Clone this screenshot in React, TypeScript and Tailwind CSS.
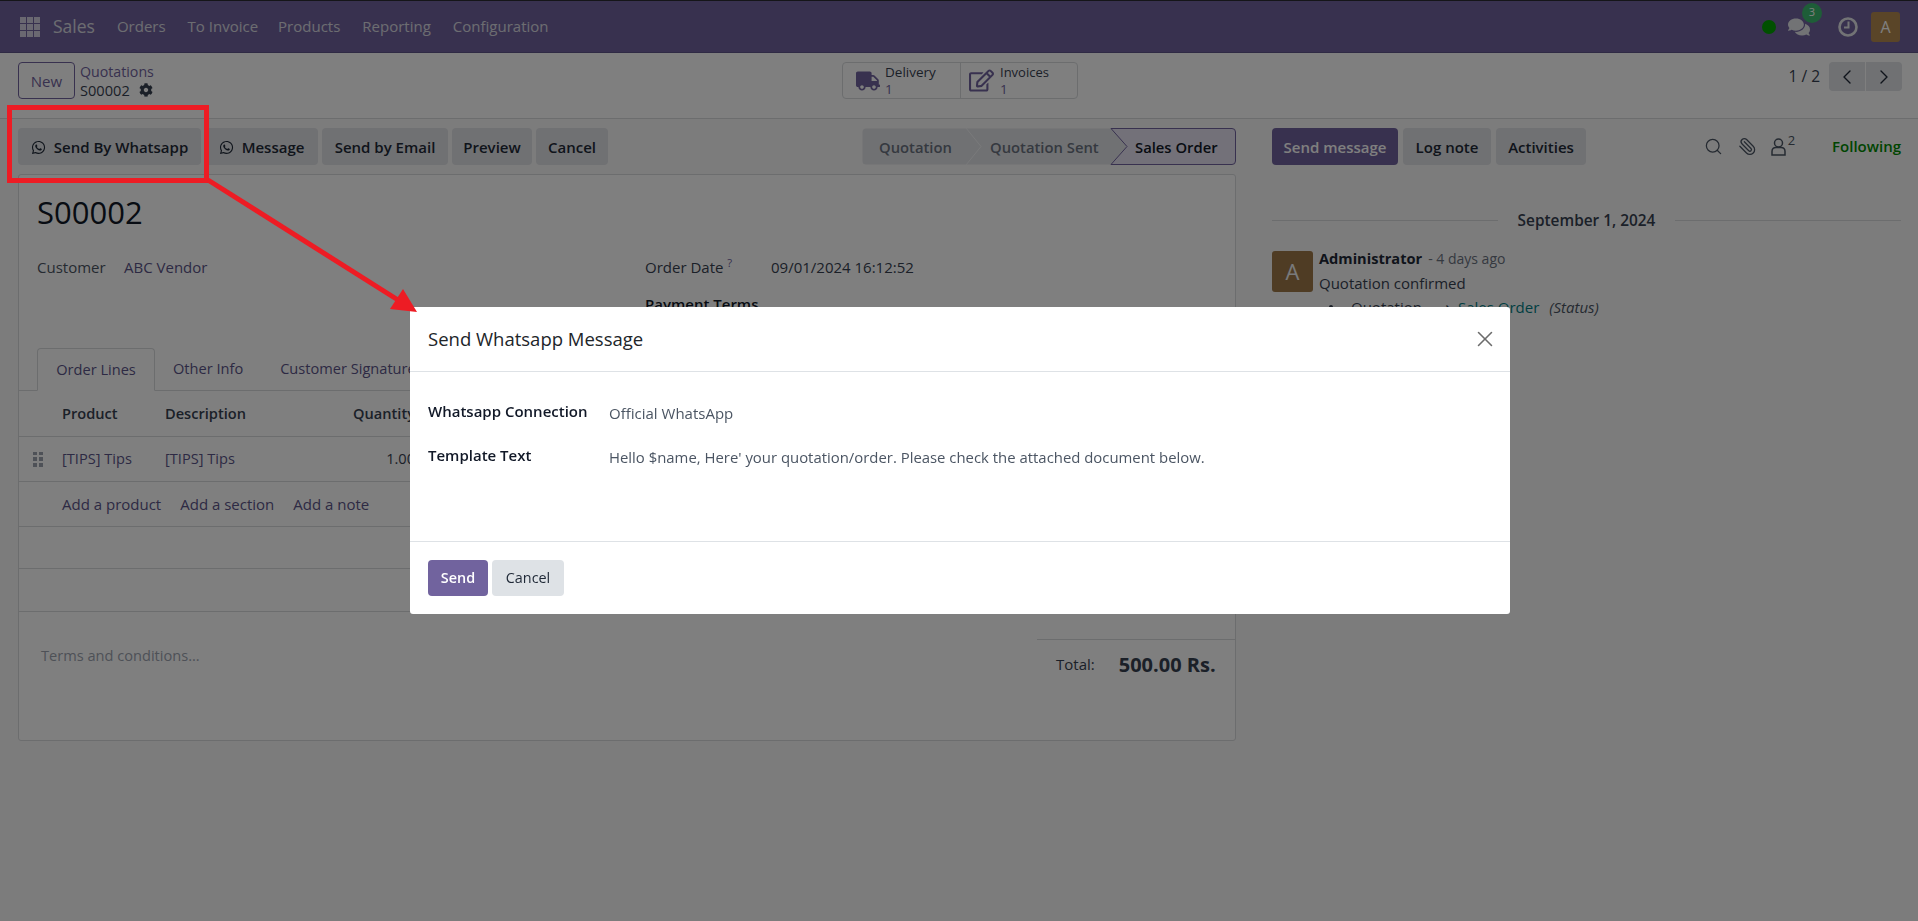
import React from "react";
import { FaCog, FaComments, FaRegEdit, FaTruck, FaWhatsapp } from "react-icons/fa";
import { ChevronLeft, ChevronRight, Paperclip, Search, X } from "lucide-react";

const GrayBtn = ({ children, w }: { children: React.ReactNode; w: string }) => (
  <div className={`flex h-[37px] items-center justify-center gap-[8px] rounded-[4px] bg-[#e0e2e6] pt-[1px] text-[15px] font-semibold text-[#1f2937] ${w}`}>
    {children}
  </div>
);

const AppsIcon = () => (
  <div className="grid h-[20px] w-[20px] grid-cols-3 gap-[1px]">
    {[0, 1, 2, 3, 4, 5, 6, 7, 8].map((i) => (
      <div key={i} className="bg-[#ffffff] opacity-70" />
    ))}
  </div>
);

const DragHandle = () => (
  <div className="grid h-[15px] w-[10px] grid-cols-2 gap-x-[2px] gap-y-[2px]">
    {[0, 1, 2, 3, 4, 5].map((i) => (
      <div key={i} className="bg-[#9ca3af]" />
    ))}
  </div>
);

const Navbar = () => (
  <div className="flex h-[53px] items-center border-t border-b border-t-[#2a2a33] border-b-[#5f5488] bg-[#71639e] text-[#e5e7eb]">
    <div className="ml-[20px] mr-[13px]">
      <AppsIcon />
    </div>
    <span className="mr-[22px] text-[17.5px] opacity-90">Sales</span>
    <nav className="flex gap-[22px] text-[15px] opacity-90">
      <span>Orders</span>
      <span className="mr-[-2px]">To Invoice</span>
      <span>Products</span>
      <span>Reporting</span>
      <span>Configuration</span>
    </nav>
    <div className="ml-auto mr-[18px] flex items-center">
      <div className="mr-[12px] h-[14px] w-[14px] rounded-full bg-[#00a000]" />
      <div className="relative mr-[27px] w-[23px] text-[#e5e7eb]">
        <FaComments size={22} />
        <span className="absolute left-[14px] top-[-13px] flex h-[20px] w-[20px] items-center justify-center rounded-full bg-[#3dbb70] text-[11px] text-white">
          3
        </span>
      </div>
      <svg className="mr-[13px]" width="20" height="20" viewBox="0 0 20 20" fill="none" stroke="#e5e7eb" strokeWidth="2.6">
        <circle cx="10" cy="10" r="8.5" />
        <path d="M10.5 4.5V10.5H6" strokeWidth="2" />
      </svg>
      <div className="flex h-[30px] w-[29px] items-center justify-center rounded-[3px] bg-[#b58a50] text-[16px] text-white">A</div>
    </div>
  </div>
);

const ControlPanel = () => (
  <div className="relative flex h-[66px] items-start border-b border-[#d8dadd] bg-white pl-[18px] pr-[16px] pt-[9px]">
    <div className="flex h-[37px] w-[57px] items-center justify-center rounded-[4px] border border-[#71639e] pt-[1px] text-[15px] font-medium text-[#71639e]">
      New
    </div>
    <div className="ml-[5px] flex flex-col pt-[1px] text-[14.2px] leading-[18px] text-[#71639e]">
      <span>Quotations</span>
      <span className="flex items-center gap-[9px] text-[14.6px] text-[#374151]">
        S00002 <FaCog size={14} />
      </span>
    </div>
    <div className="absolute left-[842px] top-[9px] flex h-[37px] w-[236px] rounded-[4px] border border-[#d8dadd] text-[13.5px] leading-[17px] text-[#374151]">
      <div className="flex w-[118px] items-center border-r border-[#d8dadd] pl-[13px]">
        <FaTruck size={24} className="text-[#71639e]" />
        <div className="ml-[5px] flex flex-col pt-[1px]">
          <span>Delivery</span>
          <span className="text-[#71639e]">1</span>
        </div>
      </div>
      <div className="flex items-center pl-[8px]">
        <FaRegEdit size={25} className="text-[#71639e]" />
        <div className="ml-[6px] flex flex-col pt-[1px]">
          <span className="text-[13px]">Invoices</span>
          <span className="text-[#71639e]">1</span>
        </div>
      </div>
    </div>
    <div className="ml-auto flex items-center gap-[9px] text-[15.5px] text-[#374151]">
      <span>1 / 2</span>
      <div className="flex h-[29px] w-[73px] overflow-hidden rounded-[4px] bg-[#e0e2e6]">
        <div className="flex flex-1 items-center justify-center border-r border-white text-[#1f2937]">
          <ChevronLeft size={24} strokeWidth={1.4} />
        </div>
        <div className="flex flex-1 items-center justify-center text-[#1f2937]">
          <ChevronRight size={24} strokeWidth={1.4} />
        </div>
      </div>
    </div>
  </div>
);

const StatusBar = () => (
  <div className="relative ml-auto h-[37px] w-[374px]">
    <svg className="absolute inset-0" width="374" height="37" viewBox="0 0 374 37" fill="none">
      <path d="M4 .5H249L265 18.5L249 36.5H4Q.5 36.5 .5 33V4Q.5 .5 4 .5Z" fill="#e0e2e6" />
      <path d="M249 .5H370Q373.5 .5 373.5 4V33Q373.5 36.5 370 36.5H249L265 18.5Z" fill="#e6e2f2" stroke="#71639e" />
      <path d="M104 0L119 18.5L104 37" stroke="#f3f4f6" />
    </svg>
    <div className="absolute inset-0 flex items-center pt-[1px] text-[14.8px] font-semibold">
      <span className="ml-[17px] w-[110px] text-[#6b7280]">Quotation</span>
      <span className="ml-[1px] w-[145px] text-[#6b7280]">Quotation Sent</span>
      <span className="text-[#111827]">Sales Order</span>
    </div>
  </div>
);

const Row = ({ children, h }: { children?: React.ReactNode; h: string }) => (
  <div className={`grid grid-cols-[43px_103px_250px] items-center border-b border-[#d8dadd] text-[14.6px] ${h}`}>{children}</div>
);

const Sheet = () => (
  <div className="mt-[9px] flex h-[567px] flex-col rounded-[3px] border border-[#d8dadd] bg-white">
    <div className="h-[173px] pl-[18px] pt-[17px]">
      <div className="text-[31px] font-medium leading-[40px] text-[#111827]">S00002</div>
      <div className="mt-[24px] flex items-start">
        <div className="flex w-[608px] items-center">
          <span className="w-[87px] text-[15px] text-[#4b5563]">Customer</span>
          <span className="text-[#5b5488]">ABC Vendor</span>
        </div>
        <div className="flex flex-col">
          <div className="flex items-center text-[#374151]">
            <span className="w-[126px]">
              Order Date <sup className="text-[#71639e]">?</sup>
            </span>
            <span>09/01/2024 16:12:52</span>
          </div>
          <span className="mt-[14px] font-semibold text-[#111827]">Payment Terms</span>
        </div>
      </div>
    </div>
    <div className="flex h-[43px] items-end border-b border-[#d8dadd] pl-[18px] text-[14.6px] text-[#5b5488]">
      <div className="z-10 mb-[-1px] flex h-[43px] w-[118px] items-center justify-center rounded-t-[4px] border border-[#d8dadd] border-b-white bg-white">
        Order Lines
      </div>
      <div className="flex h-[43px] items-center pl-[18px] pr-[37px]">Other Info</div>
      <div className="flex h-[43px] items-center">Customer Signature</div>
    </div>
    <Row h="h-[46px]">
      <span />
      <span className="font-semibold text-[#374151]">Product</span>
      <div className="flex justify-between font-semibold text-[#374151]">
        <span>Description</span>
        <span>Quantity</span>
      </div>
    </Row>
    <Row h="h-[45px]">
      <div className="pl-[14px]">
        <DragHandle />
      </div>
      <span className="text-[#5b5488]">[TIPS] Tips</span>
      <div className="flex justify-between text-[#5b5488]">
        <span>[TIPS] Tips</span>
        <span className="text-[#374151]">1.00</span>
      </div>
    </Row>
    <div className="flex h-[45px] items-center gap-[19px] border-b border-[#d8dadd] pl-[43px] text-[#5b5488]">
      <span>Add a product</span>
      <span>Add a section</span>
      <span>Add a note</span>
    </div>
    <Row h="h-[42px]" />
    <Row h="h-[43px]" />
    <div className="flex flex-1">
      <div className="pl-[22px] pt-[33px] text-[14.6px] text-[#9ca3af]">Terms and conditions...</div>
      <div className="ml-auto mt-[27px] flex h-[50px] w-[198px] items-center border-t border-[#d8dadd] pl-[19px]">
        <span className="text-[#374151]">Total:</span>
        <span className="ml-[24px] text-[20px] font-bold text-[#374151]">500.00 Rs.</span>
      </div>
    </div>
  </div>
);

const Chatter = () => (
  <div className="flex-1 pl-[23px] pr-[17px] pt-[9px] text-[#374151]">
    <div className="flex items-center gap-[5px]">
      <div className="flex h-[37px] w-[126px] items-center justify-center rounded-[4px] bg-[#71639e] pt-[1px] text-[15px] font-semibold text-white">
        Send message
      </div>
      <GrayBtn w="w-[88px]">Log note</GrayBtn>
      <GrayBtn w="w-[90px]">Activities</GrayBtn>
      <div className="ml-auto flex items-center text-[#4b5563]">
        <Search size={19} strokeWidth={1.6} />
        <Paperclip size={19} strokeWidth={1.6} className="ml-[15px] -scale-x-100" />
        <svg className="ml-[14px]" width="15" height="18" viewBox="0 0 15 18" fill="none" stroke="currentColor" strokeWidth="1.5">
          <circle cx="7.5" cy="5" r="4" />
          <path d="M1 17V13.5Q1 9.5 5 9.5H10Q14 9.5 14 13.5V17Z" />
        </svg>
        <sup className="ml-[2px] mr-[37px] text-[13px]">2</sup>
        <span className="text-[15px] font-semibold text-[#008a00]">Following</span>
      </div>
    </div>
    <div className="mt-[44px] flex items-center">
      <div className="h-[1px] w-[226px] bg-[#d8dadd]" />
      <span className="mx-auto text-[15.4px] font-semibold text-[#374151]">September 1, 2024</span>
      <div className="h-[1px] w-[226px] bg-[#d8dadd]" />
    </div>
    <div className="mt-[19px] flex">
      <div className="flex h-[41px] w-[41px] items-center justify-center rounded-[3px] bg-[#9e7849] text-[22px] text-[#f3f4f6]">A</div>
      <div className="ml-[6px] mt-[-5px] flex flex-col leading-[24px]">
        <div>
          <span className="text-[14.6px] font-bold text-[#1f2937]">Administrator</span>
          <span className="ml-[6px] text-[14px] text-[#6b7280]">- 4 days ago</span>
        </div>
        <span>Quotation confirmed</span>
        <div className="flex items-center">
          <span className="ml-[10px] mr-[18px] h-[4px] w-[4px] rounded-full bg-[#374151]" />
          <span>Quotation</span>
          <span className="mx-[7px]">⟶</span>
          <span className="font-medium text-[#017e84]">Sales Order</span>
          <span className="ml-[10px] italic text-[#4b5563]">(Status)</span>
        </div>
      </div>
    </div>
  </div>
);

const Modal = () => (
  <div className="fixed inset-0 z-20 bg-black/50">
    <div className="ml-[410px] mt-[307px] flex h-[307px] w-[1100px] flex-col rounded-[3px] bg-white text-[#374151]">
      <div className="flex h-[65px] items-center justify-between border-b border-[#dee2e6] pl-[18px] pr-[12px]">
        <span className="text-[18.5px] font-medium text-[#212529]">Send Whatsapp Message</span>
        <X size={26} strokeWidth={1.4} className="text-[#6c6c6c]" />
      </div>
      <div className="flex-1 pl-[18px] pt-[28px]">
        <div className="flex items-start">
          <span className="w-[181px] font-semibold text-[#111827]">Whatsapp Connection</span>
          <span className="mt-[2px] text-[#4b5563]">Official WhatsApp</span>
        </div>
        <div className="mt-[19px] flex items-start">
          <span className="w-[181px] font-semibold text-[#111827]">Template Text</span>
          <span className="mt-[2px] text-[14.9px] text-[#4b5563]">Hello $name, Here' your quotation/order. Please check the attached document below.</span>
        </div>
      </div>
      <div className="flex h-[73px] items-center gap-[4px] border-t border-[#dee2e6] pl-[18px] text-[14.4px]">
        <div className="flex h-[36px] w-[60px] items-center justify-center rounded-[4px] bg-[#71639e] font-semibold text-white">Send</div>
        <div className="flex h-[36px] w-[72px] items-center justify-center rounded-[4px] bg-[#dee2e6] font-medium text-[#1f2937]">Cancel</div>
      </div>
    </div>
  </div>
);

const Annotation = () => (
  <svg className="pointer-events-none fixed left-0 top-0 z-30" width="1918" height="921" viewBox="0 0 1918 921" fill="none">
    <rect x="9.5" y="107.5" width="197" height="73" stroke="#ed1c24" strokeWidth="5" />
    <path d="M208 180L398 300" stroke="#ed1c24" strokeWidth="5" />
    <path d="M417 312L390 309L403 289Z" fill="#ed1c24" />
  </svg>
);

export default function App() {
  return (
    <div
      className="relative h-[921px] w-full overflow-hidden bg-[#f9f9f9] text-[15px]"
      style={{ fontFamily: '"Open Sans", "Noto Sans", sans-serif' }}
    >
      <Navbar />
      <ControlPanel />
      <div className="flex">
        <div className="w-[1249px] pl-[18px] pr-[13px] pt-[9px]">
          <div className="flex items-center">
            <div className="flex gap-[4px]">
              <GrayBtn w="w-[183px]">
                <FaWhatsapp size={15} /> Send By Whatsapp
              </GrayBtn>
              <GrayBtn w="w-[113px]">
                <FaWhatsapp size={15} /> Message
              </GrayBtn>
              <GrayBtn w="w-[126px]">Send by Email</GrayBtn>
              <GrayBtn w="w-[80px]">Preview</GrayBtn>
              <GrayBtn w="w-[72px]">Cancel</GrayBtn>
            </div>
            <StatusBar />
          </div>
          <Sheet />
        </div>
        <Chatter />
      </div>
      <Modal />
      <Annotation />
    </div>
  );
}
